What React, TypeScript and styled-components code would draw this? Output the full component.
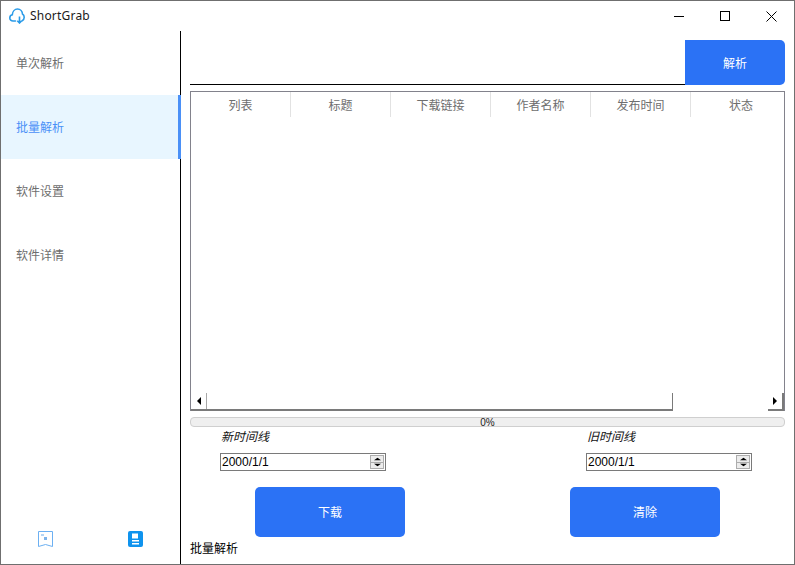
import React from 'react'
import styled, { createGlobalStyle } from 'styled-components'

const GlobalStyle = createGlobalStyle`
  html, body { margin: 0; padding: 0; background: #fff; }
  * { box-sizing: border-box; }
  body { font-family: "Noto Sans", "Noto Sans CJK SC", sans-serif; }
`

const Window = styled.div`
  width: 795px;
  height: 565px;
  border: 1px solid #6f6f6f;
  background: #fff;
  display: flex;
  flex-direction: column;
  overflow: hidden;
`

const TitleBar = styled.div`
  height: 30px;
  flex: none;
  display: flex;
  align-items: center;
  padding-left: 8px;
`

const AppName = styled.span`
  margin-left: 5px;
  margin-bottom: 2px;
  font-size: 12px;
  letter-spacing: 0.2px;
  color: #1a1a1a;
  flex: 1;
`

const WinButton = styled.div`
  width: 46px;
  height: 30px;
  display: flex;
  align-items: center;
  justify-content: center;
`

const Body = styled.div`
  flex: 1;
  display: flex;
  min-height: 0;
`

const Sidebar = styled.div`
  width: 180px;
  flex: none;
  border-right: 1px solid #000;
  display: flex;
  flex-direction: column;
`

const NavItem = styled.div<{ $active?: boolean }>`
  height: 64px;
  padding-left: 15px;
  display: flex;
  align-items: center;
  font-size: 12px;
  color: ${p => (p.$active ? '#4a90f7' : '#6e6e6e')};
  background: ${p => (p.$active ? '#e8f6ff' : 'transparent')};
  border-right: ${p => (p.$active ? '3px solid #4a90f7' : 'none')};
  margin-right: ${p => (p.$active ? '-1px' : '0')};
`

const SideFooter = styled.div`
  margin-top: auto;
  height: 33px;
  display: flex;
  align-items: flex-start;
  padding-left: 37px;
  gap: 75px;
`

const Main = styled.div`
  flex: 1;
  min-width: 0;
  padding: 9px 9px 0 9px;
  display: flex;
  flex-direction: column;
`

const SearchRow = styled.div`
  height: 45px;
  flex: none;
  display: flex;
`

const SearchInput = styled.div`
  flex: 1;
  border-bottom: 1px solid #000;
`

const ParseButton = styled.div`
  width: 100px;
  background: #2b72f5;
  color: #fff;
  font-size: 12px;
  border-radius: 0 5px 5px 0;
  display: flex;
  align-items: center;
  justify-content: center;
`

const Table = styled.div`
  margin-top: 6px;
  height: 320px;
  flex: none;
  border: 1px solid #82828c;
  border-bottom: none;
  display: flex;
  flex-direction: column;
`

const HeaderRow = styled.div`
  height: 25px;
  flex: none;
  display: flex;
  overflow: hidden;
`

const HeaderCell = styled.div`
  width: 100px;
  flex: none;
  border-right: 1px solid #e2e2e2;
  font-size: 12px;
  color: #6e6e6e;
  display: flex;
  align-items: center;
  justify-content: center;
  &:last-child { border-right: none; }
`

const TableBody = styled.div`
  flex: 1;
`

const ScrollBar = styled.div`
  height: 18px;
  flex: none;
  display: flex;
  border-bottom: 2px solid #7a7a7a;
`

const ScrollEnd = styled.div`
  width: 16px;
  flex: none;
  display: flex;
  align-items: center;
  justify-content: center;
`

const ScrollStart = styled(ScrollEnd)`
  border-right: 1px solid #a8a8a8;
`

const ScrollThumb = styled.div`
  width: 466px;
  flex: none;
  border-right: 1px solid #7a7a7a;
`

const ScrollTrack = styled.div`
  flex: 1;
  margin-bottom: -2px;
  background: #fff;
`

const ScrollEndRight = styled(ScrollEnd)`
  border-right: 2px solid #7a7a7a;
`

const Progress = styled.div`
  margin-top: 6px;
  height: 10px;
  flex: none;
  background: #efefef;
  border: 1px solid #cfcfcf;
  border-radius: 4px;
  font-family: "Liberation Sans", sans-serif;
  font-size: 10px;
  line-height: 10px;
  color: #222;
  text-align: center;
`

const DateRow = styled.div`
  margin-top: 3px;
  height: 41px;
  flex: none;
  display: flex;
  padding-left: 30px;
  gap: 200px;
`

const DateField = styled.div`
  width: 166px;
  flex: none;
  display: flex;
  flex-direction: column;
`

const DateLabel = styled.div`
  height: 23px;
  padding-left: 1px;
  font-size: 12px;
  line-height: 14px;
  font-style: italic;
  color: #111;
`

const DateBox = styled.div`
  height: 18px;
  border: 1px solid #7a7a7a;
  display: flex;
  align-items: center;
  justify-content: space-between;
  padding: 0 1px;
  font-family: "Liberation Sans", sans-serif;
  font-size: 12px;
  color: #000;
`

const Spinner = styled.div`
  width: 14px;
  height: 14px;
  border: 1px solid #adadad;
  background: #ececec;
  display: flex;
  flex-direction: column;
`

const SpinPart = styled.div`
  flex: 1;
  display: flex;
  align-items: center;
  justify-content: center;
  & + & { border-top: 1px solid #adadad; }
`

const ActionRow = styled.div`
  margin-top: 16px;
  height: 50px;
  flex: none;
  display: flex;
  padding-left: 65px;
  gap: 165px;
`

const ActionButton = styled.div`
  width: 150px;
  background: #2b72f5;
  color: #fff;
  font-size: 12px;
  border-radius: 5px;
  display: flex;
  align-items: center;
  justify-content: center;
`

const StatusText = styled.div`
  margin-top: 3px;
  font-size: 12px;
  line-height: 17px;
  color: #000;
`

const Arrow = ({ dir }: { dir: 'l' | 'r' | 'u' | 'd' }) => {
  const points = { l: '5,0 5,8 1,4', r: '1,0 1,8 5,4', u: '4,1 0,5 8,5', d: '0,1 8,1 4,5' }[dir]
  const horizontal = dir === 'l' || dir === 'r'
  return (
    <svg width={horizontal ? 6 : 7} height={horizontal ? 8 : 4} viewBox={horizontal ? '0 0 6 8' : '0 0 8 6'} preserveAspectRatio="none">
      <polygon points={points} fill="#000" />
    </svg>
  )
}

const CloudIcon = () => (
  <svg width="16" height="16" viewBox="0 0 16 16" fill="none" stroke="#2a9be8" strokeWidth="1.6">
    <path d="M6.500 13H4C2.200 13 .8 11.700.8 9.900.8 8.300 1.900 7.100 3.300 6.800 3.500 3.500 5.800 1 8.500 1c2.800 0 4.800 2.200 5 5 1 .7 1.700 1.900 1.700 3.200 0 1.600-.8 2.800-2 3.500" strokeLinecap="round" />
    <path d="M10.500 8.500v6.500M8.300 12.800l2.200 2.200 2.200-2.200" />
  </svg>
)

const BookmarkIcon = () => (
  <svg width="15" height="16" viewBox="0 0 15 16" fill="none">
    <path d="M.5.500h14v15l-7-2-7 2z" stroke="#6cb0f2" />
    <rect x="3" y="3" width="3" height="2" fill="#b5d5f4" />
    <rect x="6" y="6" width="3" height="3" fill="#7fb4ea" />
  </svg>
)

const NoteIcon = () => (
  <svg width="15" height="16" viewBox="0 0 15 16">
    <rect width="15" height="16" rx="2" fill="#0f93ee" />
    <rect x="4" y="2.500" width="6" height="5" fill="#fff" />
    <rect x="4" y="9" width="7" height="1.500" fill="#fff" />
    <rect x="4" y="12" width="7" height="1.500" fill="#fff" />
  </svg>
)

const DatePicker = ({ label }: { label: string }) => (
  <DateField>
    <DateLabel>{label}</DateLabel>
    <DateBox>
      2000/1/1
      <Spinner>
        <SpinPart><Arrow dir="u" /></SpinPart>
        <SpinPart><Arrow dir="d" /></SpinPart>
      </Spinner>
    </DateBox>
  </DateField>
)

const navItems = ['单次解析', '批量解析', '软件设置', '软件详情']
const columns = ['列表', '标题', '下载链接', '作者名称', '发布时间', '状态']

const App = () => {
  return (
    <Window>
      <GlobalStyle />
      <TitleBar>
        <CloudIcon />
        <AppName>ShortGrab</AppName>
        <WinButton>
          <svg width="11" height="11" viewBox="0 0 11 11"><path d="M0 5.500h10" stroke="#000" /></svg>
        </WinButton>
        <WinButton>
          <svg width="11" height="11" viewBox="0 0 11 11"><rect x=".5" y=".5" width="9" height="9" fill="none" stroke="#000" /></svg>
        </WinButton>
        <WinButton>
          <svg width="11" height="11" viewBox="0 0 11 11"><path d="M.5.500l10 10M10.500.500l-10 10" stroke="#000" /></svg>
        </WinButton>
      </TitleBar>
      <Body>
        <Sidebar>
          {navItems.map((n, i) => (
            <NavItem key={n} $active={i === 1}>{n}</NavItem>
          ))}
          <SideFooter>
            <BookmarkIcon />
            <NoteIcon />
          </SideFooter>
        </Sidebar>
        <Main>
          <SearchRow>
            <SearchInput />
            <ParseButton>解析</ParseButton>
          </SearchRow>
          <Table>
            <HeaderRow>
              {columns.map(c => (
                <HeaderCell key={c}>{c}</HeaderCell>
              ))}
            </HeaderRow>
            <TableBody />
            <ScrollBar>
              <ScrollStart><Arrow dir="l" /></ScrollStart>
              <ScrollThumb />
              <ScrollTrack />
              <ScrollEndRight><Arrow dir="r" /></ScrollEndRight>
            </ScrollBar>
          </Table>
          <Progress>0%</Progress>
          <DateRow>
            <DatePicker label="新时间线" />
            <DatePicker label="旧时间线" />
          </DateRow>
          <ActionRow>
            <ActionButton>下载</ActionButton>
            <ActionButton>清除</ActionButton>
          </ActionRow>
          <StatusText>批量解析</StatusText>
        </Main>
      </Body>
    </Window>
  )
}

export default App
